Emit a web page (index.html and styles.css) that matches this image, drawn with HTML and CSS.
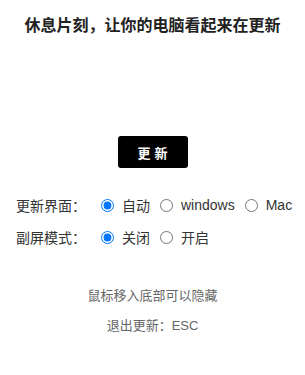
FILE: index.html
```html
<!DOCTYPE html>
<html lang="zh-CN">
  <head>
    <meta charset="UTF-8" />
    <meta name="viewport" content="width=device-width, initial-scale=1.0" />
    <title>更新</title>
    <link rel="stylesheet" href="styles.css">
  </head>
  <body>
    <div class="panel">
      <h1 class="panel-title">休息片刻，让你的电脑看起来在更新</h1>

      <div class="panel-action">
        <button class="start-button">更新</button>
      </div>

      <div class="options">
        <div class="option-row">
          <span class="option-label">更新界面：</span>
          <label class="option-item">
            <input type="radio" name="ui" checked />
            <span>自动</span>
          </label>
          <label class="option-item">
            <input type="radio" name="ui" />
            <span>windows</span>
          </label>
          <label class="option-item">
            <input type="radio" name="ui" />
            <span>Mac</span>
          </label>
        </div>
        <div class="option-row">
          <span class="option-label">副屏模式：</span>
          <label class="option-item">
            <input type="radio" name="screen" checked />
            <span>关闭</span>
          </label>
          <label class="option-item">
            <input type="radio" name="screen" />
            <span>开启</span>
          </label>
        </div>
      </div>

      <div class="tips">
        <p class="tip">鼠标移入底部可以隐藏</p>
        <p class="tip">退出更新：ESC</p>
      </div>
    </div>
  </body>
</html>
```

FILE: styles.css
```css
body {
  margin: 0;
  background: #ffffff;
  font-family: "Liberation Sans", Arial, "Noto Sans CJK SC", sans-serif;
  color: #333333;
}

.panel {
  width: 305px;
  padding-top: 14px;
}

/* 标题 */
.panel-title {
  margin: 0;
  font-size: 16px;
  line-height: 24px;
  font-weight: bold;
  color: #222222;
  text-align: center;
}

.panel-action {
  display: flex;
  justify-content: center;
  margin-top: 98px;
}

.start-button {
  width: 70px;
  height: 32px;
  border: none;
  border-radius: 3px;
  background: #000000;
  color: #ffffff;
  font-family: inherit;
  font-size: 13px;
  font-weight: bold;
  letter-spacing: 4px;
  padding: 0 0 0 4px;
  cursor: pointer;
}

/* 选项 */
.options {
  margin-top: 27px;
  padding-left: 16px;
  display: flex;
  flex-direction: column;
  gap: 12px;
}

.option-row {
  display: flex;
  align-items: center;
  height: 20px;
  font-size: 14px;
}

.option-label {
  width: 85px;
}

.option-item {
  display: flex;
  align-items: center;
  margin-right: 10px;
}

.option-item input {
  width: 13px;
  height: 13px;
  margin: 0 8px 0 0;
}

/* 提示 */
.tips {
  margin-top: 40px;
  display: flex;
  flex-direction: column;
  gap: 12px;
  text-align: center;
}

.tip {
  margin: 0;
  font-size: 13px;
  line-height: 18px;
  color: #666666;
}
```
